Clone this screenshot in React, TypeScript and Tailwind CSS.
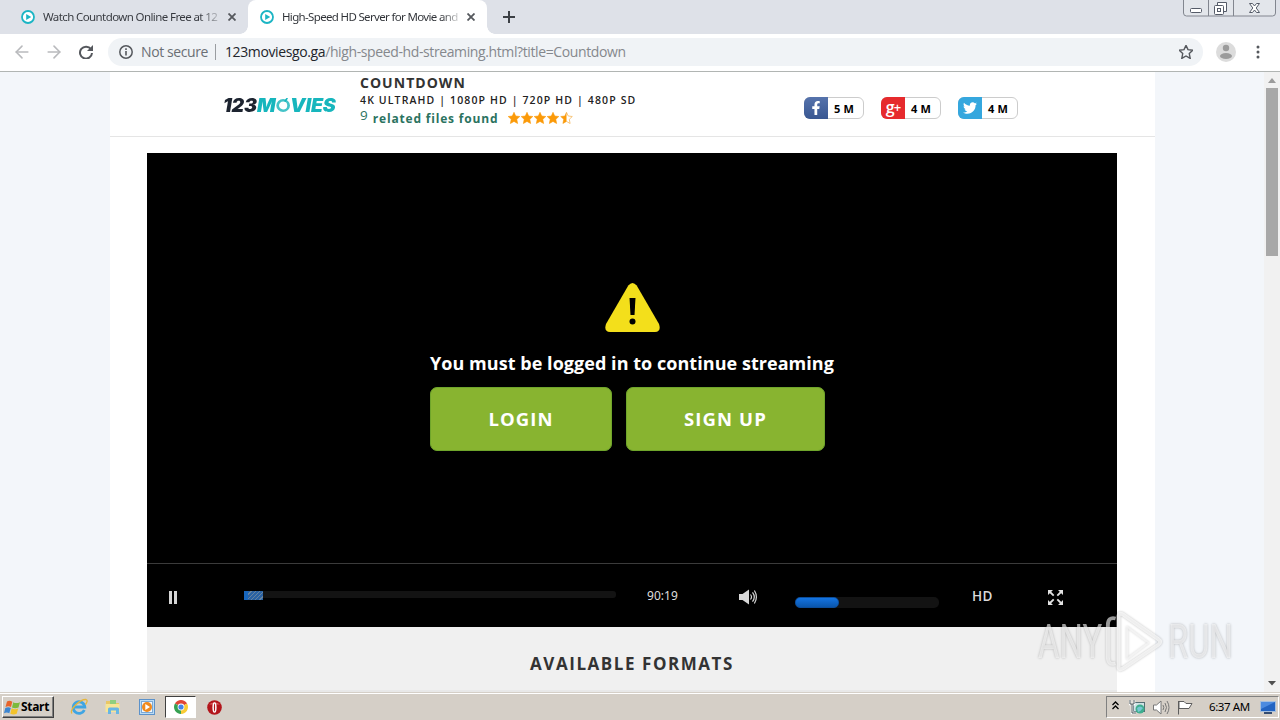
import { FaFacebookF, FaTwitter } from 'react-icons/fa'
import { ArrowLeft, ArrowRight } from 'lucide-react'

const TABS = [
  { title: 'Watch Countdown Online Free at 12', active: false },
  { title: 'High-Speed HD Server for Movie and', active: true },
]

const STAR = 'M6 0.3 L7.7 4 L11.8 4.5 L8.8 7.3 L9.6 11.5 L6 9.4 L2.4 11.5 L3.2 7.3 L0.2 4.5 L4.3 4 Z'

const PlayFavicon = () => (
  <svg width="14" height="14" viewBox="0 0 14 14" className="shrink-0">
    <circle cx="7" cy="7" r="6" fill="#fff" stroke="#1cb5c4" strokeWidth="1.8" />
    <path d="M5.2 3.9 10.2 7l-5 3.1z" fill="#1cb5c4" />
  </svg>
)

const CloseIcon = () => (
  <svg width="8" height="8" viewBox="0 0 8 8" className="shrink-0">
    <path d="M0.5 0.5l7 7M7.5 0.5l-7 7" stroke="#55585d" strokeWidth="1.8" />
  </svg>
)

const TabStrip = () => (
  <div className="flex h-[34px] shrink-0 items-start bg-[#dee1e8]">
    <div className="flex">
      {TABS.map((t) => (
        <div
          key={t.title}
          className={
            t.active
              ? 'relative flex h-[34px] w-[239px] items-center rounded-t-lg bg-white pl-3'
              : 'flex h-[34px] w-[248px] items-center pl-[21px]'
          }
        >
          {t.active && (
            <>
              <div className="absolute bottom-0 -left-2 h-2 w-2 bg-[radial-gradient(circle_at_0_0,#dee1e8_7.5px,#fff_8px)]" />
              <div className="absolute -right-2 bottom-0 h-2 w-2 bg-[radial-gradient(circle_at_100%_0,#dee1e8_7.5px,#fff_8px)]" />
            </>
          )}
          <PlayFavicon />
          <span
            className={
              t.active
                ? 'ml-2 w-[177px] bg-linear-to-r from-[#2f3237] from-90% to-[#2f323730] bg-clip-text font-[Noto_Sans,sans-serif] text-[11.5px] tracking-[-0.66px] whitespace-nowrap text-transparent'
                : 'ml-2 w-[175px] bg-linear-to-r from-[#35383e] from-90% to-[#35383e40] bg-clip-text font-[Noto_Sans,sans-serif] text-[11.5px] tracking-[-0.6px] whitespace-nowrap text-transparent'
            }
          >
            {t.title}
          </span>
          <span className={t.active ? 'ml-[8px]' : 'ml-[10px]'}>
            <CloseIcon />
          </span>
        </div>
      ))}
    </div>
    <svg width="12" height="12" viewBox="0 0 12 12" className="mt-[11px] ml-[16px]">
      <path d="M6 0v12M0 6h12" stroke="#3c4045" strokeWidth="2" />
    </svg>
    <svg width="94" height="17" viewBox="0 0 94 17" fill="none" className="mr-[3px] ml-auto">
      <path d="M0.5 0v13q0 3 3 3h86q3 0 3-3V0" fill="#e3e6eb" stroke="#82868f" />
      <path d="M25.5 0v16M50.5 0v16" stroke="#82868f" />
      <rect x="7.5" y="8.5" width="11" height="4" rx="1" fill="#fff" stroke="#555b68" />
      <path d="M34.5 5.5v-3h9v9h-3" fill="#fff" stroke="#555b68" />
      <rect x="31.5" y="5.5" width="9" height="9" rx="1" fill="#fff" stroke="#555b68" />
      <rect x="34.5" y="8.5" width="3" height="3" stroke="#555b68" />
      <path d="M66.5 3.5h3l2 2.5 2-2.5h3l-3.3 4.5 3.3 4.5h-3l-2-2.5-2 2.5h-3l3.3-4.5z" fill="#fff" stroke="#555b68" />
    </svg>
  </div>
)

const Toolbar = () => (
  <div className="flex h-[38px] shrink-0 items-center border-b border-[#b1b5b3] bg-white pb-px">
    <ArrowLeft size={20} strokeWidth={1.9} color="#b9babd" className="ml-[12px]" />
    <ArrowRight size={20} strokeWidth={1.9} color="#b9babd" className="ml-[12px]" />
    <svg width="14" height="14" viewBox="0 0 14 14" className="ml-[15px]">
      <path d="M12 4.3A6 6 0 1 0 13 8" fill="none" stroke="#55585d" strokeWidth="2" />
      <path d="M14 0v6H8z" fill="#55585d" />
    </svg>
    <div className="ml-[15px] flex h-7 w-[1095px] items-center rounded-full bg-[#f0f3f6] pl-[11px] font-[Open_Sans,sans-serif] text-[14px]">
      <svg width="14" height="14" viewBox="0 0 14 14">
        <circle cx="7" cy="7" r="6.2" fill="none" stroke="#55585d" strokeWidth="1.5" />
        <path d="M7 6v4.5M7 3.3v1.7" stroke="#55585d" strokeWidth="1.6" />
      </svg>
      <span className="ml-[8px] w-[68px] pb-0.5 tracking-[-0.4px] whitespace-nowrap text-[#6b6f75]">Not secure</span>
      <span className="ml-[6px] h-4 w-px bg-[#9a9da1]" />
      <span className="ml-[9px] pb-0.5 tracking-[-0.385px] whitespace-nowrap text-[#85888d]">
        <span className="text-[#22252b]">123moviesgo.ga</span>/high-speed-hd-streaming.html?title=Countdown
      </span>
      <svg width="14" height="14" viewBox="0 0 12 12" className="mr-[10px] ml-auto">
        <path d={STAR} fill="none" stroke="#55585d" strokeWidth="1.2" />
      </svg>
    </div>
    <svg width="20" height="20" viewBox="0 0 20 20" className="ml-[13px]">
      <circle cx="10" cy="10" r="10" fill="#dcdcdc" />
      <circle cx="10" cy="6" r="3.2" fill="#9b9b9b" />
      <ellipse cx="10" cy="14" rx="6" ry="3" fill="#9b9b9b" />
    </svg>
    <svg width="4" height="14" viewBox="0 0 4 14" fill="#55585d" className="ml-[20px]">
      <circle cx="2" cy="2" r="1.5" />
      <circle cx="2" cy="7" r="1.5" />
      <circle cx="2" cy="12" r="1.5" />
    </svg>
  </div>
)

const Logo = () => (
  <div className="ml-[113px] flex h-[16px] w-[114px] origin-left scale-x-[1.055] items-center font-[Inter,sans-serif] text-[18.5px] leading-none font-black tracking-[-0.2px] italic">
    <span className="text-[#1d2430]">123</span>
    <span className="text-[#17b6bd]">M</span>
    <svg width="14" height="15" viewBox="0 0 14 15" className="shrink-0">
      <circle cx="7" cy="7.5" r="5.2" fill="none" stroke="#45c3c8" strokeWidth="2.6" />
      <path d="M8.5 3.5 11 0" stroke="#17b6bd" strokeWidth="1.5" />
    </svg>
    <span className="text-[#17b6bd]">VIES</span>
  </div>
)

const Stars = () => (
  <svg width="66" height="12" viewBox="0 0 66 12" className="mt-[5px] ml-[10px]">
    {[0, 13, 26, 39].map((x) => (
      <path key={x} d={STAR} transform={`translate(${x} 0)`} fill="#fb9a09" stroke="#fb9a09" strokeWidth="0.6" />
    ))}
    <path d={STAR} transform="translate(52.5 0)" fill="#fff" stroke="#f5b95e" strokeWidth="0.8" />
    <path d="M6 0.3V9.4L2.4 11.5L3.2 7.3L0.2 4.5L4.3 4Z" transform="translate(52.5 0)" fill="#fb9a09" />
  </svg>
)

const GooglePlusMark = () => (
  <span className="flex pb-[3px] font-[Open_Sans,sans-serif] text-[16px] leading-none font-semibold tracking-[-1px] text-white">
    g<span className="pt-[2px] text-[13px]">+</span>
  </span>
)

const SOCIALS = [
  { name: 'facebook', icon: <FaFacebookF size={14} color="#fff" />, count: '5 M', bg: 'bg-linear-to-b from-[#5673ac] to-[#395792]' },
  { name: 'google', icon: <GooglePlusMark />, count: '4 M', bg: 'bg-[#e62a2d]' },
  { name: 'twitter', icon: <FaTwitter size={14} color="#fff" />, count: '4 M', bg: 'bg-[#35a7de]' },
]

const SiteHeader = () => (
  <header className="flex h-[65px] shrink-0 items-start border-b border-[#e5e5e5]">
    <div className="flex h-[66px] items-center">
      <Logo />
    </div>
    <div className="ml-[23px] w-[300px] font-[Open_Sans,sans-serif] font-bold whitespace-nowrap">
      <div className="mt-[2px] h-[17px] text-[14px] leading-[17px] tracking-[1.03px] text-[#333]">COUNTDOWN</div>
      <div className="mt-[3px] h-[13px] text-[10.5px] leading-[13px] font-semibold tracking-[1.13px] text-[#222]">
        4K ULTRAHD | 1080P HD | 720P HD | 480P SD
      </div>
      <div className="flex h-[20px] items-start text-[#2b735f]">
        <span className="text-[13.5px] leading-[16px] font-normal">9</span>
        <span className="mt-[4px] ml-[5px] text-[12px] leading-[16px] tracking-[0.82px]">related files found</span>
        <Stars />
      </div>
    </div>
    <div className="mt-[25px] ml-[144px] flex gap-[17px]">
      {SOCIALS.map(({ name, icon, count, bg }) => (
        <div
          key={name}
          className="flex h-[22px] w-[60px] rounded-[6px] border border-[#ccc] bg-white"
        >
          <div className={`-my-px -ml-px flex h-[22px] w-[24px] items-center justify-center rounded-l-[6px] ${bg}`}>{icon}</div>
          <span className="ml-[6px] font-[Open_Sans,sans-serif] text-[11px] leading-[22px] font-bold tracking-[0.2px] text-black">
            {count}
          </span>
        </div>
      ))}
    </div>
  </header>
)

const PlayerControls = () => (
  <div className="flex h-[64px] border-t border-[#3b3b3b]">
    <div className="mt-[27px] ml-[22px] flex h-[13px] gap-[2px]">
      <span className="w-[3px] bg-[#d5d5d5]" />
      <span className="w-[3px] bg-[#d5d5d5]" />
    </div>
    <div className="mt-[27px] ml-[67px] h-[7px] w-[372px] rounded-r-[3px] bg-[#131313]">
      <div className="flex h-[9px] w-[19px]">
        <span className="w-[4px] bg-[#1766bd]" />
        <span className="w-[15px] bg-[repeating-linear-gradient(135deg,#2a62a3_0_2px,#6683a0_2px_3px)]" />
      </div>
    </div>
    <span className="mt-[23px] ml-[31px] w-[34px] font-[Noto_Sans,sans-serif] text-[12px] leading-[17px] tracking-[0.05px] text-[#ddd]">
      90:19
    </span>
    <svg width="20" height="16" viewBox="0 0 20 16" className="mt-[25px] ml-[57px]">
      <path d="M1 5h3.5L11 0.5v15L4.5 11H1z" fill="#d8d8d8" />
      <path d="M12.5 5.5q2 2.5 0 5M14.5 3.3q3.6 4.7 0 9.4M16.4 1.5q4 6.500 0 13" fill="none" stroke="#d8d8d8" strokeWidth="1.2" />
    </svg>
    <div className="mt-[33px] ml-[37px] h-[11px] w-[144px] rounded-[5px] bg-[#131313]">
      <div className="h-[11px] w-[44px] rounded-[5px] border border-[#0b4d9b] bg-linear-to-b from-[#1474e2] to-[#0a56ad]" />
    </div>
    <span className="mt-[23px] ml-[33px] w-[22px] font-[Open_Sans,sans-serif] text-[13.5px] leading-[18px] font-semibold tracking-[0.3px] text-[#dadada]">
      HD
    </span>
    <svg width="15" height="15" viewBox="0 0 15 15" fill="#e2e2e2" stroke="#e2e2e2" className="mt-[26px] ml-[54px]">
      <path d="M0 0h5L0 5zM15 0v5L10 0zM0 15v-5l5 5zM15 15h-5l5-5z" stroke="none" />
      <path d="M2 2l3.7 3.7M13 2 9.3 5.7M2 13l3.7-3.7M13 13 9.3 9.3" strokeWidth="1.8" />
    </svg>
  </div>
)

const Player = () => (
  <div className="mt-4 ml-[37px] flex h-[474px] w-[970px] shrink-0 flex-col bg-black">
    <div className="flex flex-1 flex-col items-center pt-[130px] font-[Open_Sans,sans-serif]">
      <svg width="56" height="50" viewBox="0 0 56 50">
        <path d="M24.3 2.5Q28.5-2.5 32.7 2.5L55 41Q57.5 48.5 51 49H6Q-0.5 48.5 2 41Z" fill="#f3df1b" />
        <path d="M25.5 15h6l-1 17h-4z" fill="#000" />
        <circle cx="28.5" cy="38.5" r="3" fill="#000" />
      </svg>
      <p className="mt-[15px] text-[18px] leading-[30px] font-bold tracking-[0.045px] whitespace-nowrap text-white">
        You must be logged in to continue streaming
      </p>
      <div className="mt-[9px] mr-[9px] flex gap-[14px]">
        <button className="h-16 w-[182px] rounded-[7px] border border-[#6fa52b] bg-[#88b430] text-[18.5px] font-bold tracking-[1.1px] text-white">
          LOGIN
        </button>
        <button className="h-16 w-[199px] rounded-[7px] border border-[#6fa52b] bg-[#88b430] text-[18.5px] font-bold tracking-[1.1px] text-white">
          SIGN UP
        </button>
      </div>
    </div>
    <PlayerControls />
  </div>
)

const Scrollbar = () => (
  <div className="flex h-full w-4 flex-col items-center bg-[#f1f1f1]">
    <svg width="8" height="5" viewBox="0 0 8 5" className="mt-[6px]">
      <path d="M0 5 4 0l4 5z" fill="#9b9b9b" />
    </svg>
    <div className="mt-[5px] h-[168px] w-3 bg-[#a8a8a8]" />
    <svg width="8" height="5" viewBox="0 0 8 5" className="mt-auto mb-[6px]">
      <path d="M0 0h8L4 4.5z" fill="#505050" />
    </svg>
  </div>
)

const Watermark = () => (
  <div className="absolute top-[608px] left-[1038px] flex h-[66px] items-center font-[Roboto,sans-serif] text-[49px] leading-none text-white/60 [text-shadow:0_0_3px_rgba(0,0,0,0.28)]">
    <div className="w-[66px]">
      <span className="inline-block origin-left scale-x-[0.67]">ANY</span>
    </div>
    <svg width="62" height="62" viewBox="0 0 64 66" preserveAspectRatio="none" fill="none" strokeLinejoin="round" className="drop-shadow-[0_0_1px_rgba(0,0,0,0.35)]">
      <path d="M12 9q-8-2-8 7v34q0 9 8 7" stroke="#fff" strokeOpacity="0.6" strokeWidth="4" />
      <path d="M15 7q0-5 5-2l36 26q4 3 0 6L20 62q-5 3-5-2z" stroke="#fff" strokeOpacity="0.7" strokeWidth="4" />
      <path d="M24 18v34l22-17z" stroke="#fff" strokeOpacity="0.5" strokeWidth="2" />
    </svg>
    <div className="ml-[2px] w-[66px]">
      <span className="inline-block origin-left scale-x-[0.67]">RUN</span>
    </div>
  </div>
)

const WindowsFlag = () => (
  <svg width="17" height="15" viewBox="0 0 17 15">
    <path d="M3 1.5Q5.5 0 8.3 1.8L7 7Q4.5 5.5 1.5 7z" fill="#e8642b" />
    <path d="M9.3 2.2Q12 4 16 2.2L14.5 7.5Q11 9 8 7.4z" fill="#7cba3d" />
    <path d="M1.3 8Q4.3 6.5 6.8 8L5.3 13.3Q3 11.8 0 13.2z" fill="#3d86d1" />
    <path d="M7.7 8.3Q11 10 14.2 8.4L12.7 13.7Q9.5 15.2 6.3 13.7z" fill="#f3c32b" />
  </svg>
)

const InternetExplorer = () => (
  <svg width="18" height="18" viewBox="0 0 18 18" fill="none">
    <path d="M14.3 12A5.8 5.8 0 1 1 14.8 9H4" stroke="#3fa5e3" strokeWidth="2.8" />
    <path d="M2 15.5C-1 12 10 1 16 1.5q2.5 1-0.5 5" stroke="#e6b63b" strokeWidth="1.3" />
  </svg>
)

const Explorer = () => (
  <svg width="16" height="16" viewBox="0 0 16 16">
    <path d="M1 2h5l1 2h7v9H1z" fill="#e9c766" />
    <path d="M5 1h6v4H5z" fill="#8fcf7e" />
    <path d="M0.5 5h14v8h-14z" fill="#f7e596" />
    <path d="M3 15v-5q0-1.5 1.5-1.5h8q1.5 0 1.5 1.5v5h-3v-3.5H6V15z" fill="#68b6e4" />
  </svg>
)

const MediaPlayer = () => (
  <svg width="16" height="16" viewBox="0 0 16 16">
    <rect x="0.5" y="0.5" width="15" height="15" fill="#bcdcf4" stroke="#5c92ca" />
    <rect x="2.5" y="2.5" width="11" height="11" fill="#f1f7fc" stroke="#7ba9d6" />
    <circle cx="8" cy="8" r="5" fill="#f08a1d" />
    <path d="M6.3 5 11 8l-4.7 3z" fill="#fff" />
  </svg>
)

const Chrome = () => (
  <svg width="14" height="14" viewBox="0 0 14 14">
    <path d="M7 7 0.94 3.5A7 7 0 0 1 13.06 3.5z" fill="#e04536" />
    <path d="M7 7 13.06 3.5A7 7 0 0 1 7 14z" fill="#f9cb35" />
    <path d="M7 7 7 14A7 7 0 0 1 0.94 3.5z" fill="#36a152" />
    <circle cx="7" cy="7" r="3.4" fill="#fff" />
    <circle cx="7" cy="7" r="2.6" fill="#4483ea" />
  </svg>
)

const Opera = () => (
  <svg width="15" height="15" viewBox="0 0 15 15">
    <circle cx="7.5" cy="7.5" r="7.3" fill="#b3151b" />
    <path d="M2 4.5a7 5 0 0 1 11 0z" fill="#d9595c" />
    <ellipse cx="7.5" cy="7.5" rx="2.1" ry="5.3" fill="#fff" />
    <ellipse cx="7.5" cy="7.5" rx="0.6" ry="4" fill="#b3151b" />
  </svg>
)

const Tray = () => (
  <div className="mt-[3px] mr-px ml-auto flex h-[22px] w-[173px] items-center border border-t-[#808080] border-r-white border-b-white border-l-[#808080]">
    <svg width="7" height="9" viewBox="0 0 7 9" fill="none" stroke="#000" strokeWidth="1.3" className="mb-[3px] ml-[5px]">
      <path d="M0.5 4 3.5 1l3 3M0.5 8l3-3 3 3" />
    </svg>
    <svg width="17" height="16" viewBox="0 0 17 16" className="ml-[10px]">
      <rect x="4.5" y="3.5" width="11" height="9" fill="#cfe3e6" stroke="#546d74" />
      <path d="M1 1v4h4V1M3 5v9h4" fill="none" stroke="#fff" strokeWidth="2.5" />
      <path d="M1 1v4h4V1M3 5v9h4" fill="none" stroke="#4b5558" strokeWidth="1" />
      <circle cx="11" cy="10" r="4.5" fill="#3eae8e" />
      <path d="M8 9q3-3 6 0-2 3-5 4z" fill="#78c6d5" />
    </svg>
    <svg width="17" height="15" viewBox="0 0 17 15" fill="none" stroke="#777" className="ml-[7px]">
      <path d="M0.5 5h3L8 1v13L3.5 10h-3z" fill="#fff" />
      <path d="M10 5q1.5 2.5 0 5M12 3q3 4.5 0 9M14 1q4 6.5 0 13" />
    </svg>
    <svg width="17" height="15" viewBox="0 0 17 15" className="ml-[7px]" fill="#fff" stroke="#5d5d5d">
      <path d="M1.5 1v13.5M2 1.5h5l2 2h6l-3 5H2z" />
    </svg>
    <span className="ml-[15px] w-[43px] font-[Noto_Sans,sans-serif] text-[11.5px] tracking-[-0.4px] whitespace-nowrap text-black">
      6:37 AM
    </span>
    <svg width="16" height="13" viewBox="0 0 16 13" className="ml-[8px]">
      <rect x="0.5" y="0.5" width="15" height="10" fill="#2364c2" stroke="#a6bfdd" />
      <path d="M1 1h14L1 8z" fill="#4c8be0" />
      <path d="M4 12h8" stroke="#344c71" strokeWidth="2" />
    </svg>
  </div>
)

const Taskbar = () => (
  <div className="flex h-[28px] shrink-0 items-start border-t border-[#d5cfc7] bg-[#d5cfc7] shadow-[inset_0_1px_0_#fff]">
    <div className="mt-[3px] ml-[2px] flex h-[22px] w-[52px] items-center border border-t-white border-r-[#404040] border-b-[#404040] border-l-white pl-px shadow-[inset_-1px_-1px_0_#808080]">
      <WindowsFlag />
      <span className="font-[Noto_Sans,sans-serif] text-[12px] font-bold tracking-[-0.3px] text-black">Start</span>
    </div>
    <div className="mt-[3px] ml-[16px] flex h-[22px] items-center">
      <InternetExplorer />
      <span className="ml-[17px]">
        <Explorer />
      </span>
      <span className="ml-[18px]">
        <MediaPlayer />
      </span>
      <div className="ml-[10px] flex h-[22px] w-[31px] items-center justify-center border border-t-[#404040] border-r-white border-b-white border-l-[#404040] bg-white">
        <Chrome />
      </div>
      <span className="ml-[11px]">
        <Opera />
      </span>
    </div>
    <Tray />
  </div>
)

export default function App() {
  return (
    <div className="relative flex h-[720px] w-[1280px] flex-col overflow-hidden bg-white">
      <TabStrip />
      <Toolbar />
      <div className="flex h-[620px] shrink-0 bg-[#f3f6fa]">
        <div className="ml-[110px] flex w-[1045px] flex-col overflow-hidden bg-white">
          <SiteHeader />
          <Player />
          <div className="ml-[37px] h-[65px] w-[970px] border-b-2 border-[#e8e8e8] bg-[#f0f0f0] pt-[25px] text-center font-[Open_Sans,sans-serif] text-[17px] leading-[24px] font-bold tracking-[1.55px] text-[#333]">
            AVAILABLE FORMATS
          </div>
        </div>
        <div className="ml-auto h-full">
          <Scrollbar />
        </div>
      </div>
      <Taskbar />
      <Watermark />
    </div>
  )
}
